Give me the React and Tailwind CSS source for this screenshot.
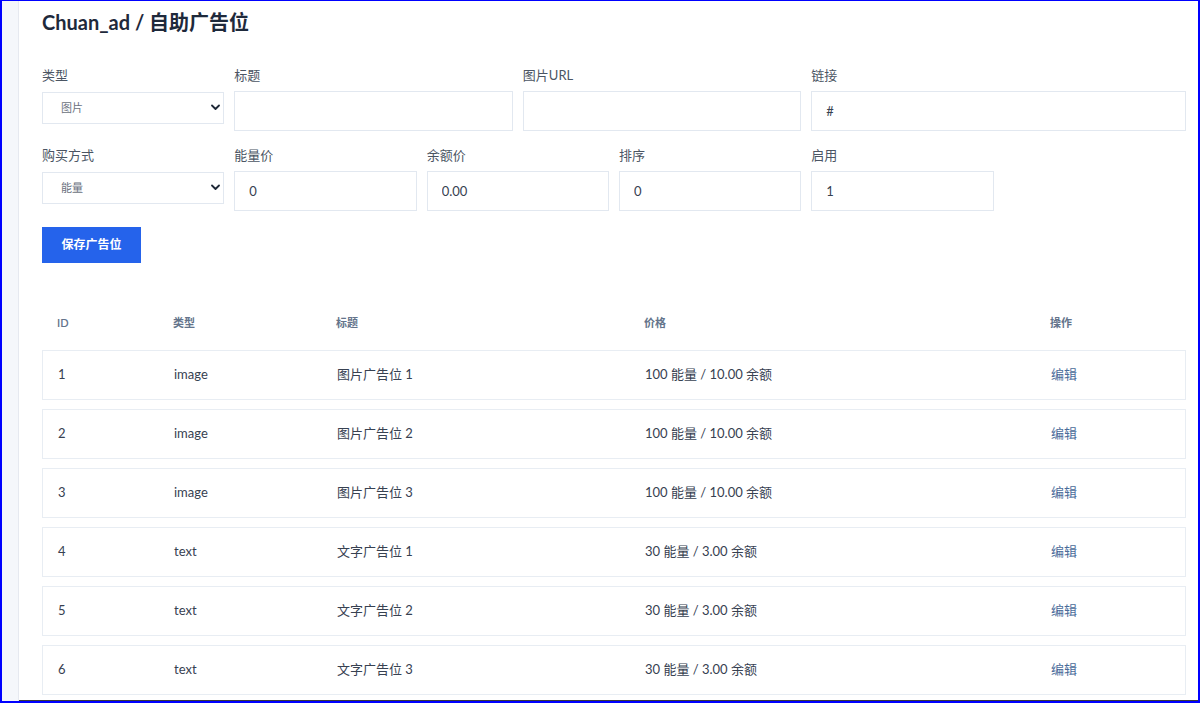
import React from 'react';

const rows = [
  { id: 1, type: 'image', title: '图片广告位 1', price: '100 能量 / 10.00 余额' },
  { id: 2, type: 'image', title: '图片广告位 2', price: '100 能量 / 10.00 余额' },
  { id: 3, type: 'image', title: '图片广告位 3', price: '100 能量 / 10.00 余额' },
  { id: 4, type: 'text', title: '文字广告位 1', price: '30 能量 / 3.00 余额' },
  { id: 5, type: 'text', title: '文字广告位 2', price: '30 能量 / 3.00 余额' },
  { id: 6, type: 'text', title: '文字广告位 3', price: '30 能量 / 3.00 余额' },
];

const Field = ({ label, span, children }) => (
  <div className={`flex flex-col ${span}`}>
    <label className="text-[13px] leading-[18px] text-[#4b5563] mb-[7px]">{label}</label>
    {children}
  </div>
);

const Input = ({ value }) => (
  <input
    readOnly
    value={value}
    className="h-[40px] w-full border border-[#e2e8f0] bg-white px-[14px] text-[13px] text-[#374151] outline-none"
  />
);

const Select = ({ value }) => (
  <div className="relative mt-[1px]">
    <select
      value={value}
      onChange={() => {}}
      className="h-[32px] w-full appearance-none border border-[#e2e8f0] bg-white pl-[18px] text-[11px] text-[#6b7280] outline-none"
    >
      <option>{value}</option>
    </select>
    {/* chevron */}
    <svg className="pointer-events-none absolute right-[4px] top-[12px]" width="9" height="7" viewBox="0 0 9 7">
      <path d="M1 1.5 L4.5 5 L8 1.5" fill="none" stroke="#1f2937" strokeWidth="1.8" strokeLinecap="round" strokeLinejoin="round" />
    </svg>
  </div>
);

const cols = 'grid grid-cols-[116px_163px_308px_406px_1fr] items-center';

export default function App() {
  return (
    <div
      className="h-[703px] w-[1200px] overflow-hidden border-t border-l-2 border-r-2 border-b-2 border-[#0000ff] flex"
      style={{ fontFamily: 'Lato, "Noto Sans CJK SC", sans-serif' }}
    >
      <div className="w-[17px] shrink-0 bg-[#f5f7fb] border-r border-[#e6e9f0]" />
      <div className="flex-1 bg-white pl-[23px] pr-[12px] border-b border-[#3a3a3a]">
        <h1 className="pt-[7px] text-[20px] leading-[28px] font-bold text-[#1e293b]">Chuan_ad / 自助广告位</h1>

        <div className="mt-[30px] grid grid-cols-12 gap-x-[10px] gap-y-[15px] items-start">
          <Field label="类型" span="col-span-2"><Select value="图片" /></Field>
          <Field label="标题" span="col-span-3"><Input value="" /></Field>
          <Field label="图片URL" span="col-span-3"><Input value="" /></Field>
          <Field label="链接" span="col-span-4"><Input value="#" /></Field>

          <Field label="购买方式" span="col-span-2"><Select value="能量" /></Field>
          <Field label="能量价" span="col-span-2"><Input value="0" /></Field>
          <Field label="余额价" span="col-span-2"><Input value="0.00" /></Field>
          <Field label="排序" span="col-span-2"><Input value="0" /></Field>
          <Field label="启用" span="col-span-2"><Input value="1" /></Field>
        </div>

        <button className="mt-[16px] h-[36px] w-[99px] bg-[#2563eb] text-[12px] font-bold text-white">保存广告位</button>

        <div className="mt-[47px]">
          <div className={`${cols} h-[26px] mb-[14px] px-[15px] text-[11px] font-semibold text-[#64748b]`}>
            <div>ID</div>
            <div>类型</div>
            <div>标题</div>
            <div>价格</div>
            <div>操作</div>
          </div>
          <div className="flex flex-col gap-[9px]">
            {rows.map((r) => (
              <div key={r.id} className={`${cols} h-[50px] border border-[#e8edf3] px-[15px] text-[13px] text-[#374151]`}>
                <div>{r.id}</div>
                <div>{r.type}</div>
                <div>{r.title}</div>
                <div>{r.price}</div>
                <div><a href="#" className="text-[#4a6b9a]">编辑</a></div>
              </div>
            ))}
          </div>
        </div>
      </div>
    </div>
  );
}
